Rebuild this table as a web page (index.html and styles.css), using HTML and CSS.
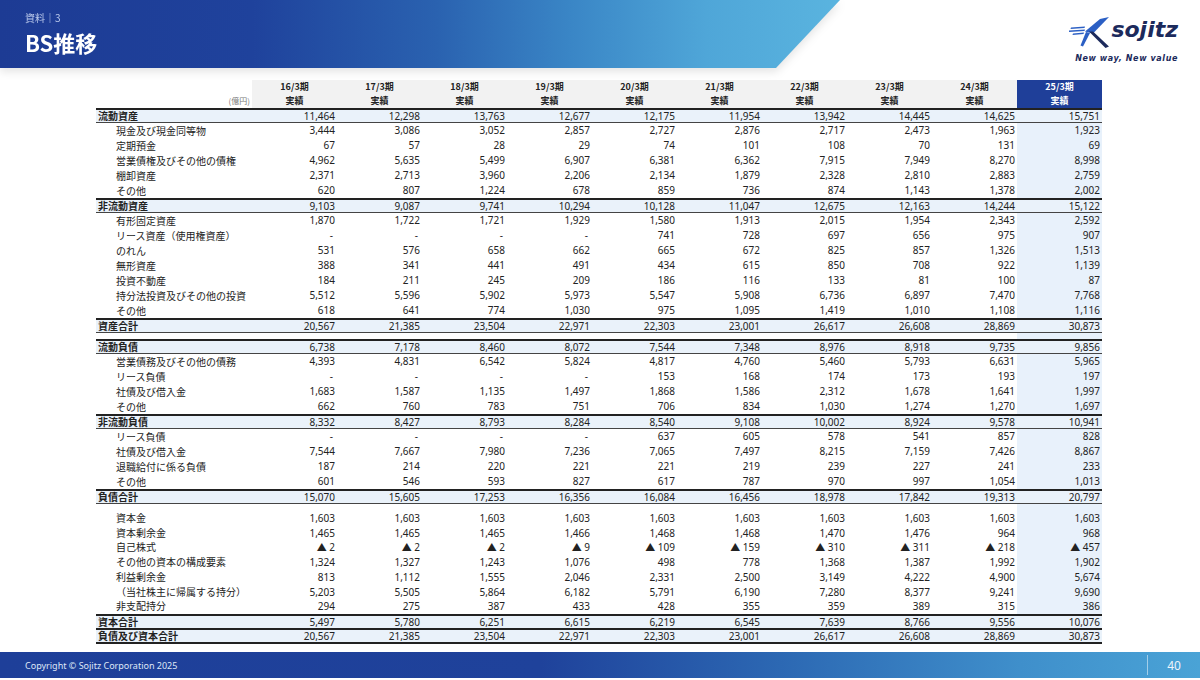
FILE: index.html
```html
<!DOCTYPE html>
<html lang="ja">
<head>
<meta charset="utf-8">
<title>BS推移</title>
<link rel="stylesheet" href="styles.css">
</head>
<body>
<div class="page">
  <header class="top">
    <div class="band-wrap">
      <div class="band">
        <div class="crumb">資料｜3</div>
        <h1 class="title">BS推移</h1>
      </div>
    </div>
    <div class="logo">
      <div class="logo-row">
        <svg class="mark" viewBox="0 0 40 31" width="40" height="31">
          <polygon points="31,2 40,0 24,16.5 16,14.5" fill="#2b5fc4"/>
          <polygon points="2,10.5 16,9.5 15.5,11 1.5,12" fill="#2b5fc4"/>
          <polygon points="0,13.5 16,12.5 15.5,14 0,15" fill="#2b5fc4"/>
          <polygon points="4,16.5 15,15.5 14.5,17 3.5,18" fill="#2b5fc4"/>
          <polygon points="17,15 21,16 14,29.5 11.5,28.5" fill="#2b5fc4"/>
          <polygon points="20,14.5 24,14.5 40,29.5 36.5,31" fill="#1c2a5c"/>
        </svg>
        <span class="brand">sojitz</span>
      </div>
      <div class="tagline">New way, New value</div>
    </div>
  </header>

  <main class="content">
    <table class="bs">
      <colgroup>
        <col class="c-lbl">
        <col class="c-num"><col class="c-num"><col class="c-num"><col class="c-num"><col class="c-num">
        <col class="c-num"><col class="c-num"><col class="c-num"><col class="c-num"><col class="c-num">
      </colgroup>
      <thead>
        <tr>
          <th class="unit">(億円)</th>
          <th>16/3期<br>実績</th>
          <th>17/3期<br>実績</th>
          <th>18/3期<br>実績</th>
          <th>19/3期<br>実績</th>
          <th>20/3期<br>実績</th>
          <th>21/3期<br>実績</th>
          <th>22/3期<br>実績</th>
          <th>23/3期<br>実績</th>
          <th>24/3期<br>実績</th>
          <th class="cur">25/3期<br>実績</th>
        </tr>
      </thead>
      <tbody>
        <tr class="sec first"><td class="lbl">流動資産</td><td>11,464</td><td>12,298</td><td>13,763</td><td>12,677</td><td>12,175</td><td>11,954</td><td>13,942</td><td>14,445</td><td>14,625</td><td class="cur">15,751</td></tr>
        <tr><td class="lbl">現金及び現金同等物</td><td>3,444</td><td>3,086</td><td>3,052</td><td>2,857</td><td>2,727</td><td>2,876</td><td>2,717</td><td>2,473</td><td>1,963</td><td class="cur">1,923</td></tr>
        <tr><td class="lbl">定期預金</td><td>67</td><td>57</td><td>28</td><td>29</td><td>74</td><td>101</td><td>108</td><td>70</td><td>131</td><td class="cur">69</td></tr>
        <tr><td class="lbl">営業債権及びその他の債権</td><td>4,962</td><td>5,635</td><td>5,499</td><td>6,907</td><td>6,381</td><td>6,362</td><td>7,915</td><td>7,949</td><td>8,270</td><td class="cur">8,998</td></tr>
        <tr><td class="lbl">棚卸資産</td><td>2,371</td><td>2,713</td><td>3,960</td><td>2,206</td><td>2,134</td><td>1,879</td><td>2,328</td><td>2,810</td><td>2,883</td><td class="cur">2,759</td></tr>
        <tr><td class="lbl">その他</td><td>620</td><td>807</td><td>1,224</td><td>678</td><td>859</td><td>736</td><td>874</td><td>1,143</td><td>1,378</td><td class="cur">2,002</td></tr>
        <tr class="sec"><td class="lbl">非流動資産</td><td>9,103</td><td>9,087</td><td>9,741</td><td>10,294</td><td>10,128</td><td>11,047</td><td>12,675</td><td>12,163</td><td>14,244</td><td class="cur">15,122</td></tr>
        <tr><td class="lbl">有形固定資産</td><td>1,870</td><td>1,722</td><td>1,721</td><td>1,929</td><td>1,580</td><td>1,913</td><td>2,015</td><td>1,954</td><td>2,343</td><td class="cur">2,592</td></tr>
        <tr><td class="lbl">リース資産（使用権資産）</td><td class="dash">-</td><td class="dash">-</td><td class="dash">-</td><td class="dash">-</td><td>741</td><td>728</td><td>697</td><td>656</td><td>975</td><td class="cur">907</td></tr>
        <tr><td class="lbl">のれん</td><td>531</td><td>576</td><td>658</td><td>662</td><td>665</td><td>672</td><td>825</td><td>857</td><td>1,326</td><td class="cur">1,513</td></tr>
        <tr><td class="lbl">無形資産</td><td>388</td><td>341</td><td>441</td><td>491</td><td>434</td><td>615</td><td>850</td><td>708</td><td>922</td><td class="cur">1,139</td></tr>
        <tr><td class="lbl">投資不動産</td><td>184</td><td>211</td><td>245</td><td>209</td><td>186</td><td>116</td><td>133</td><td>81</td><td>100</td><td class="cur">87</td></tr>
        <tr><td class="lbl">持分法投資及びその他の投資</td><td>5,512</td><td>5,596</td><td>5,902</td><td>5,973</td><td>5,547</td><td>5,908</td><td>6,736</td><td>6,897</td><td>7,470</td><td class="cur">7,768</td></tr>
        <tr><td class="lbl">その他</td><td>618</td><td>641</td><td>774</td><td>1,030</td><td>975</td><td>1,095</td><td>1,419</td><td>1,010</td><td>1,108</td><td class="cur">1,116</td></tr>
        <tr class="sec"><td class="lbl">資産合計</td><td>20,567</td><td>21,385</td><td>23,504</td><td>22,971</td><td>22,303</td><td>23,001</td><td>26,617</td><td>26,608</td><td>28,869</td><td class="cur">30,873</td></tr>
        <tr class="gap g1"><td></td><td></td><td></td><td></td><td></td><td></td><td></td><td></td><td></td><td></td><td class="cur"></td></tr>
        <tr class="sec"><td class="lbl">流動負債</td><td>6,738</td><td>7,178</td><td>8,460</td><td>8,072</td><td>7,544</td><td>7,348</td><td>8,976</td><td>8,918</td><td>9,735</td><td class="cur">9,856</td></tr>
        <tr><td class="lbl">営業債務及びその他の債務</td><td>4,393</td><td>4,831</td><td>6,542</td><td>5,824</td><td>4,817</td><td>4,760</td><td>5,460</td><td>5,793</td><td>6,631</td><td class="cur">5,965</td></tr>
        <tr><td class="lbl">リース負債</td><td class="dash">-</td><td class="dash">-</td><td class="dash">-</td><td class="dash">-</td><td>153</td><td>168</td><td>174</td><td>173</td><td>193</td><td class="cur">197</td></tr>
        <tr><td class="lbl">社債及び借入金</td><td>1,683</td><td>1,587</td><td>1,135</td><td>1,497</td><td>1,868</td><td>1,586</td><td>2,312</td><td>1,678</td><td>1,641</td><td class="cur">1,997</td></tr>
        <tr><td class="lbl">その他</td><td>662</td><td>760</td><td>783</td><td>751</td><td>706</td><td>834</td><td>1,030</td><td>1,274</td><td>1,270</td><td class="cur">1,697</td></tr>
        <tr class="sec"><td class="lbl">非流動負債</td><td>8,332</td><td>8,427</td><td>8,793</td><td>8,284</td><td>8,540</td><td>9,108</td><td>10,002</td><td>8,924</td><td>9,578</td><td class="cur">10,941</td></tr>
        <tr><td class="lbl">リース負債</td><td class="dash">-</td><td class="dash">-</td><td class="dash">-</td><td class="dash">-</td><td>637</td><td>605</td><td>578</td><td>541</td><td>857</td><td class="cur">828</td></tr>
        <tr><td class="lbl">社債及び借入金</td><td>7,544</td><td>7,667</td><td>7,980</td><td>7,236</td><td>7,065</td><td>7,497</td><td>8,215</td><td>7,159</td><td>7,426</td><td class="cur">8,867</td></tr>
        <tr><td class="lbl">退職給付に係る負債</td><td>187</td><td>214</td><td>220</td><td>221</td><td>221</td><td>219</td><td>239</td><td>227</td><td>241</td><td class="cur">233</td></tr>
        <tr><td class="lbl">その他</td><td>601</td><td>546</td><td>593</td><td>827</td><td>617</td><td>787</td><td>970</td><td>997</td><td>1,054</td><td class="cur">1,013</td></tr>
        <tr class="sec"><td class="lbl">負債合計</td><td>15,070</td><td>15,605</td><td>17,253</td><td>16,356</td><td>16,084</td><td>16,456</td><td>18,978</td><td>17,842</td><td>19,313</td><td class="cur">20,797</td></tr>
        <tr class="gap g2"><td></td><td></td><td></td><td></td><td></td><td></td><td></td><td></td><td></td><td></td><td class="cur"></td></tr>
        <tr class="eq"><td class="lbl">資本金</td><td>1,603</td><td>1,603</td><td>1,603</td><td>1,603</td><td>1,603</td><td>1,603</td><td>1,603</td><td>1,603</td><td>1,603</td><td class="cur">1,603</td></tr>
        <tr class="eq"><td class="lbl">資本剰余金</td><td>1,465</td><td>1,465</td><td>1,465</td><td>1,466</td><td>1,468</td><td>1,468</td><td>1,470</td><td>1,476</td><td>964</td><td class="cur">968</td></tr>
        <tr class="eq"><td class="lbl">自己株式</td><td>▲ 2</td><td>▲ 2</td><td>▲ 2</td><td>▲ 9</td><td>▲ 109</td><td>▲ 159</td><td>▲ 310</td><td>▲ 311</td><td>▲ 218</td><td class="cur">▲ 457</td></tr>
        <tr class="eq"><td class="lbl">その他の資本の構成要素</td><td>1,324</td><td>1,327</td><td>1,243</td><td>1,076</td><td>498</td><td>778</td><td>1,368</td><td>1,387</td><td>1,992</td><td class="cur">1,902</td></tr>
        <tr class="eq"><td class="lbl">利益剰余金</td><td>813</td><td>1,112</td><td>1,555</td><td>2,046</td><td>2,331</td><td>2,500</td><td>3,149</td><td>4,222</td><td>4,900</td><td class="cur">5,674</td></tr>
        <tr class="eq"><td class="lbl">（当社株主に帰属する持分）</td><td>5,203</td><td>5,505</td><td>5,864</td><td>6,182</td><td>5,791</td><td>6,190</td><td>7,280</td><td>8,377</td><td>9,241</td><td class="cur">9,690</td></tr>
        <tr class="eq"><td class="lbl">非支配持分</td><td>294</td><td>275</td><td>387</td><td>433</td><td>428</td><td>355</td><td>359</td><td>389</td><td>315</td><td class="cur">386</td></tr>
        <tr class="sec"><td class="lbl">資本合計</td><td>5,497</td><td>5,780</td><td>6,251</td><td>6,615</td><td>6,219</td><td>6,545</td><td>7,639</td><td>8,766</td><td>9,556</td><td class="cur">10,076</td></tr>
        <tr class="sec last"><td class="lbl">負債及び資本合計</td><td>20,567</td><td>21,385</td><td>23,504</td><td>22,971</td><td>22,303</td><td>23,001</td><td>26,617</td><td>26,608</td><td>28,869</td><td class="cur">30,873</td></tr>
      </tbody>
    </table>
  </main>

  <footer class="foot">
    <span class="copy">Copyright © Sojitz Corporation 2025</span>
    <span class="sep"></span>
    <span class="pno">40</span>
  </footer>
</div>
</body>
</html>
```

FILE: styles.css
```css
html, body {
  margin: 0;
  padding: 0;
  background: #ffffff;
}
body {
  font-family: "Noto Sans", "Noto Sans CJK JP", sans-serif;
  color: #222;
}
.page {
  width: 1200px;
  height: 680px;
  display: flex;
  flex-direction: column;
  overflow: hidden;
}

/* header */
.top {
  display: flex;
  height: 68px;
  flex: 0 0 68px;
}
.band-wrap {
  filter: drop-shadow(0 4px 4px rgba(0, 0, 0, 0.10));
}
.band {
  width: 840px;
  height: 68px;
  box-sizing: border-box;
  padding: 11px 0 0 25px;
  clip-path: polygon(0 0, 840px 0, 776px 68px, 0 68px);
  background: linear-gradient(90deg, #1d3b94 0%, #1f429c 30%, #2a62b0 52%, #3a86c6 68%, #4fa6d8 84%, #5ab4df 100%);
}
.crumb {
  font-family: "Noto Sans CJK JP", sans-serif;
  font-size: 10px;
  line-height: 14px;
  color: #b9c8ea;
}
.title {
  margin: 4px 0 0;
  font-family: "Noto Sans CJK JP", sans-serif;
  font-size: 22px;
  line-height: 26px;
  font-weight: 700;
  color: #ffffff;
}

.logo {
  margin-left: auto;
  margin-right: 22px;
  padding-top: 16px;
  display: flex;
  flex-direction: column;
  align-items: flex-end;
}
.logo-row {
  display: flex;
  align-items: flex-start;
  gap: 2px;
}
.mark {
  display: block;
  margin-top: 1px;
}
.brand {
  font-family: "DejaVu Sans", sans-serif;
  font-style: italic;
  font-weight: 700;
  font-size: 22px;
  line-height: 28px;
  color: #1c2a5c;
  letter-spacing: 0px;
}
.tagline {
  margin-top: 6px;
  font-family: "DejaVu Sans", sans-serif;
  font-style: italic;
  font-weight: 700;
  font-size: 8px;
  line-height: 10px;
  color: #1c2a5c;
  letter-spacing: 0.6px;
}

/* table */
.content {
  flex: 1 1 auto;
  padding: 12px 0 0 96px;
}
.bs {
  border-collapse: collapse;
  table-layout: fixed;
  width: 1006px;
  font-size: 10px;
}
.c-lbl { width: 156px; }
.c-num { width: 85px; }

.bs thead th {
  height: 28px;
  padding: 0;
  background: #f2f2f2;
  font-family: "Noto Sans CJK JP", sans-serif;
  font-weight: 700;
  font-size: 9px;
  line-height: 14px;
  color: #222;
  text-align: center;
  border-bottom: 2px solid #222;
}
.bs thead th.unit {
  background: #ffffff;
  text-align: right;
  vertical-align: bottom;
  font-weight: 400;
  font-size: 8px;
  color: #777;
  padding-right: 2px;
}
.bs thead th.cur {
  background: #1f3f99;
  color: #ffffff;
}

.bs tbody td {
  height: 15px;
  padding: 0 2px 0 0;
  line-height: 15px;
  text-align: right;
  white-space: nowrap;
  color: #222;
}
.bs tbody tr.eq td {
  height: 14.7px;
  line-height: 14.7px;
}
.bs tbody td.lbl {
  text-align: left;
  padding-left: 20px;
  font-family: "Noto Sans CJK JP", sans-serif;
  font-size: 10px;
}
.bs tbody td.dash {
  padding-right: 4px;
}
.bs tbody td.cur {
  background: #e8f1fb;
}
.bs tbody tr.sec td {
  height: 12px;
  line-height: 12px;
  background: #eaf2fa;
  border-top: 2px solid #222;
  border-bottom: 1px solid #444;
}
.bs tbody tr.sec td.lbl {
  padding-left: 2px;
  font-weight: 700;
}
.bs tbody tr.gap td {
  height: 6px;
  line-height: 6px;
}
.bs tbody tr.g2 td {
  height: 7px;
  line-height: 7px;
}
.bs tbody tr.last td {
  border-bottom: 2px solid #222;
}

/* footer */
.foot {
  flex: 0 0 26px;
  margin-bottom: 2px;
  display: flex;
  align-items: center;
  padding: 0 0 0 25px;
  background: linear-gradient(90deg, #1e3f99 0%, #1f429b 45%, #2c68b3 65%, #3f8fcb 85%, #4aa3d6 100%);
  color: #ffffff;
}
.copy {
  font-size: 9px;
  color: #dfe7f7;
}
.sep {
  margin-left: auto;
  width: 1px;
  height: 20px;
  background: rgba(255, 255, 255, 0.5);
}
.pno {
  width: 52px;
  text-align: center;
  font-size: 12px;
  color: #eef4fb;
}
```
